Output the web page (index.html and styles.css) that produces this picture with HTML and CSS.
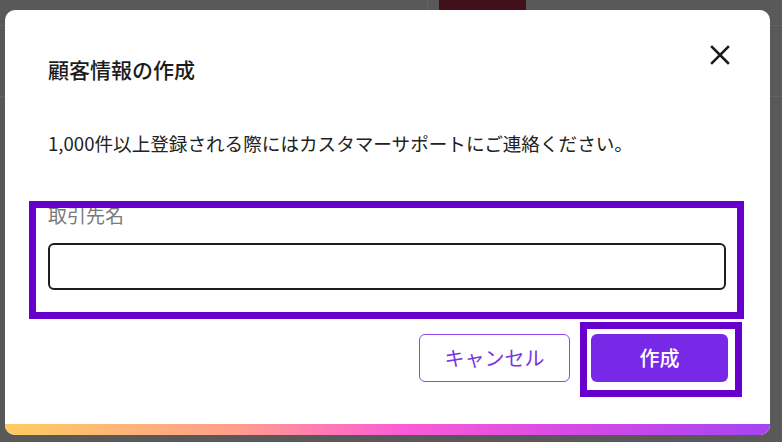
FILE: index.html
```html
<!DOCTYPE html>
<html lang="ja">
<head>
<meta charset="utf-8">
<title>顧客情報の作成</title>
<link rel="stylesheet" href="styles.css">
</head>
<body>
  <div class="page">
    <div class="page-bar">
      <div class="page-divider"></div>
      <div class="page-brand"></div>
    </div>
    <div class="page-rule"></div>
    <div class="page-rule page-rule-low"></div>
  </div>

  <div class="overlay">
    <div class="modal" role="dialog" aria-labelledby="modal-title">
      <div class="modal-inner">
        <div class="modal-header">
          <h2 class="modal-title" id="modal-title">顧客情報の作成</h2>
          <button class="close-btn" type="button" aria-label="閉じる">
            <svg width="20" height="20" viewBox="0 0 20 20" aria-hidden="true">
              <path d="M2 2 L18 18 M18 2 L2 18" stroke="#1b1b1b" stroke-width="2.5" stroke-linecap="square" fill="none"/>
            </svg>
          </button>
        </div>

        <p class="modal-note">1,000件以上登録される際にはカスタマーサポートにご連絡ください。</p>

        <div class="field">
          <label class="field-label" for="partner">取引先名</label>
          <input class="field-input" id="partner" type="text">
          <span class="focus-ring focus-ring-field"></span>
        </div>

        <div class="modal-footer">
          <button class="btn btn-outline" type="button">キャンセル</button>
          <div class="btn-wrap">
            <button class="btn btn-primary" type="button">作成</button>
            <span class="focus-ring focus-ring-btn"></span>
          </div>
        </div>
      </div>
      <div class="modal-accent"></div>
    </div>
  </div>
</body>
</html>
```

FILE: styles.css
```css
* {
  box-sizing: border-box;
}

html,
body {
  margin: 0;
  height: 100%;
}

body {
  background: #595959;
  font-family: "Noto Sans CJK JP", "Noto Sans", sans-serif;
  color: #1f1f1f;
  overflow: hidden;
  position: relative;
}

/* dimmed page behind the dialog */
.page {
  height: 100%;
}

.page-bar {
  display: flex;
  height: 10px;
  padding-left: 427px;
}

.page-divider {
  width: 1px;
  background: #646464;
}

.page-brand {
  width: 87px;
  margin-left: 11px;
  background: #42101a;
}

.page-rule {
  height: 1px;
  margin-top: 15px;
  background: #636363;
}

.page-rule-low {
  margin-top: 70px;
}

/* dialog overlay */
.overlay {
  position: absolute;
  inset: 0;
  padding: 10px 12px 7px 5px;
}

.modal {
  height: 425px;
  background: #ffffff;
  border-radius: 10px;
  overflow: hidden;
  display: flex;
  flex-direction: column;
}

.modal-inner {
  flex: 1;
  padding: 32px 44px 0 43px;
}

.modal-header {
  display: flex;
  justify-content: space-between;
  align-items: flex-start;
}

.modal-title {
  margin: 12px 0 0;
  font-size: 21px;
  font-weight: 500;
  line-height: 30px;
  color: #1c1c1c;
}

.close-btn {
  width: 26px;
  height: 26px;
  margin-right: -7px;
  padding: 0;
  border: 0;
  background: none;
  display: flex;
  align-items: center;
  justify-content: center;
  cursor: pointer;
}

.modal-note {
  margin: 45px 0 0;
  font-size: 18.6px;
  line-height: 28px;
  color: #222222;
}

.field {
  position: relative;
  margin-top: 44px;
  display: flex;
  flex-direction: column;
}

.field-label {
  font-size: 19px;
  line-height: 28px;
  color: #7a7a7a;
}

.field-input {
  margin-top: 14px;
  height: 47px;
  border: 2px solid #1e1e1e;
  border-radius: 6px;
  font: inherit;
  font-size: 18px;
  padding: 0 12px;
  outline: none;
}

.modal-footer {
  margin-top: 44px;
  margin-right: -2px;
  display: flex;
  justify-content: flex-end;
  gap: 21px;
}

.btn {
  height: 48px;
  border-radius: 6px;
  font-family: inherit;
  font-size: 20px;
  line-height: 1;
  cursor: pointer;
}

.btn-outline {
  width: 151px;
  background: #ffffff;
  border: 1px solid #8d47ec;
  color: #7a34e4;
}

.btn-wrap {
  position: relative;
  display: flex;
}

.btn-primary {
  width: 137px;
  background: #7829e8;
  border: 0;
  color: #ffffff;
  font-weight: 500;
}

/* keyboard-focus highlight drawn over the focused control */
.focus-ring {
  position: absolute;
  border: 7px solid #6700cc;
  pointer-events: none;
}

.focus-ring-field {
  top: 0;
  left: -19px;
  right: -18px;
  bottom: -29px;
}

.focus-ring-btn {
  top: -12px;
  left: -11px;
  right: -14px;
  bottom: -15px;
}

.modal-accent {
  height: 11px;
  background: linear-gradient(90deg, #ffcc62 0%, #ff9e8c 30%, #fb5cd6 52%, #d44ae6 75%, #a544f2 100%);
}
```
